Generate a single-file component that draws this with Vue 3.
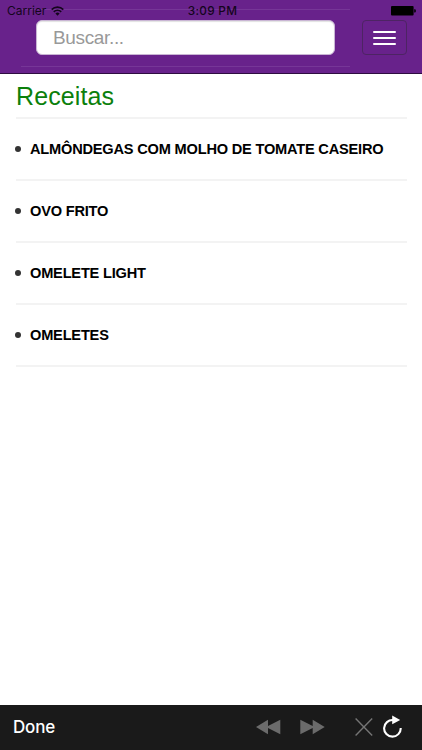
<template>
  <div class="screen">
    <header class="navbar">
      <div class="status-bar">
        <div class="carrier">
          <span class="carrier-name">Carrier</span>
          <svg class="wifi" width="13" height="10" viewBox="0 0 13 10">
            <path d="M0.7 3.6a8.2 8.2 0 0 1 11.6 0" />
            <path d="M2.8 5.8a5.2 5.2 0 0 1 7.4 0" />
            <path class="wifi-dot" d="M4.4 7.5a3 3 0 0 1 4.2 0L6.5 9.7z" />
          </svg>
        </div>
        <span class="time">3:09 PM</span>
        <svg class="battery" width="25" height="10" viewBox="0 0 25 10">
          <rect width="22.6" height="9.6" rx="1" />
          <path d="M23.2 3.2h0.6a1 1 0 0 1 1 1v1.4a1 1 0 0 1-1 1h-0.6z" />
        </svg>
      </div>

      <form class="search-form" @submit.prevent>
        <input v-model="query" class="search-input" type="text" placeholder="Buscar..." />
      </form>

      <button class="menu-btn" type="button" aria-label="Menu">
        <span class="icon-bar"></span>
        <span class="icon-bar"></span>
        <span class="icon-bar"></span>
      </button>
    </header>

    <main class="content">
      <h1 class="title">Receitas</h1>
      <ul class="recipes">
        <li v-for="recipe in recipes" :key="recipe" class="recipe">
          <span class="bullet"></span>
          <span class="recipe-name">{{ recipe }}</span>
        </li>
      </ul>
    </main>

    <footer class="toolbar">
      <button class="done-btn" type="button">Done</button>
      <div class="actions">
        <svg class="rewind" width="25" height="16" viewBox="0 0 25 16">
          <path d="M0 8L12 0.7V6.9L24.3 0.7V15.3L12 9.1V15.3z" />
        </svg>
        <svg class="forward" width="25" height="16" viewBox="0 0 25 16">
          <path d="M24.7 8L12.7 0.7V6.9L0.3 0.7V15.3L12.7 9.1V15.3z" />
        </svg>
        <svg class="stop" width="18" height="18" viewBox="0 0 18 18">
          <path d="M0.6 0.6L17.2 17.4M17.2 0.6L0.6 17.4" />
        </svg>
        <svg class="reload" width="20" height="24" viewBox="0 0 20 24">
          <path class="reload-arc" d="M10.2 5.1A8.3 8.3 0 1 0 17.7 13" />
          <path class="reload-head" d="M9.2 0.6L17.2 4.9L9.2 9.2z" />
        </svg>
      </div>
    </footer>
  </div>
</template>

<script setup>
import { ref } from 'vue';

const query = ref('');

const recipes = [
  'ALMÔNDEGAS COM MOLHO DE TOMATE CASEIRO',
  'OVO FRITO',
  'OMELETE LIGHT',
  'OMELETES'
];
</script>

<style>
body {
  margin: 0;
}
</style>

<style scoped>
.screen {
  display: flex;
  flex-direction: column;
  height: 100vh;
  overflow: hidden;
  background-color: #fff;
  font-family: "Liberation Sans", Arial, sans-serif;
}

.navbar {
  position: relative;
  display: flex;
  justify-content: space-between;
  align-items: flex-start;
  box-sizing: border-box;
  flex: none;
  height: 74px;
  padding: 9px 15px 0 21px;
  background-color: #68228b;
  border-bottom: 1px solid #2e0c40;
}

/* the system status bar lies over the navbar */
.status-bar {
  position: absolute;
  top: 0;
  left: 0;
  right: 0;
  display: grid;
  grid-template-columns: 1fr auto 1fr;
  align-items: center;
  height: 21px;
  padding: 0 6px 0 7px;
  color: #14051c;
  font-family: Inter, sans-serif;
}

.carrier {
  display: flex;
  align-items: center;
  gap: 5px;
}

.carrier-name {
  font-size: 12px;
}

.wifi path {
  fill: none;
  stroke: #14051c;
  stroke-width: 1.7;
}

.wifi .wifi-dot {
  fill: #14051c;
  stroke: none;
}

.time {
  padding-left: 2px;
  font-size: 11.8px;
  font-weight: 500;
  letter-spacing: 0.3px;
}

.battery {
  justify-self: end;
  fill: #000;
}

.search-form {
  box-sizing: border-box;
  width: 329px;
  height: 58px;
  padding: 10px 15px;
  border-top: 1px solid #763697;
  border-bottom: 1px solid #763697;
}

.search-input {
  display: block;
  box-sizing: border-box;
  width: 299px;
  height: 35px;
  padding: 0 16px;
  border: 1px solid #c9b5d4;
  border-radius: 6px;
  background-color: #fff;
  box-shadow: inset 0 1px 1px rgba(0, 0, 0, 0.12);
  font-family: inherit;
  font-size: 19px;
  letter-spacing: -0.35px;
  color: #555;
}

.search-input::placeholder {
  color: #999;
  opacity: 1;
}

.menu-btn {
  display: flex;
  flex-direction: column;
  align-items: center;
  justify-content: center;
  gap: 4px;
  box-sizing: border-box;
  width: 45px;
  height: 35px;
  margin-top: 11px;
  padding: 0;
  background: none;
  border: 1px solid #4d2463;
  border-radius: 4px;
}

.icon-bar {
  width: 23px;
  height: 2px;
  border-radius: 1px;
  background-color: #fff;
}

.content {
  flex: 1;
  padding: 0 15px 0 16px;
}

.title {
  margin: 0;
  height: 43px;
  line-height: 44px;
  font-size: 25px;
  font-weight: 400;
  letter-spacing: 0.1px;
  color: #0b800b;
}

.recipes {
  margin: 0;
  padding: 0;
  list-style: none;
  border-top: 2px solid #f3f3f3;
}

.recipe {
  display: flex;
  align-items: center;
  height: 60px;
  border-bottom: 2px solid #f3f3f3;
}

.bullet {
  width: 6px;
  height: 6px;
  margin-left: -1px;
  margin-right: 9px;
  border-radius: 50%;
  background-color: #333;
}

.recipe-name {
  font-size: 14.6px;
  font-weight: 700;
  letter-spacing: -0.2px;
  color: #000;
  white-space: nowrap;
}

.toolbar {
  display: flex;
  align-items: center;
  justify-content: space-between;
  flex: none;
  height: 45px;
  padding: 0 19px 0 13px;
  background-color: #1a1a1a;
}

.done-btn {
  padding: 0 0 1px;
  background: none;
  border: none;
  font-family: Inter, sans-serif;
  font-size: 17px;
  font-weight: 500;
  letter-spacing: -0.2px;
  color: #fff;
}

.actions {
  display: flex;
  align-items: center;
}

.rewind,
.forward {
  margin-bottom: 1px;
  fill: #6b6b6b;
}

.forward {
  margin-left: 19px;
}

.stop {
  margin-left: 30px;
  margin-bottom: 1px;
  fill: none;
  stroke: #757575;
  stroke-width: 1.4;
}

.reload {
  margin-left: 10px;
  margin-bottom: 1px;
}

.reload-arc {
  fill: none;
  stroke: #fff;
  stroke-width: 2.1;
}

.reload-head {
  fill: #fff;
}
</style>
